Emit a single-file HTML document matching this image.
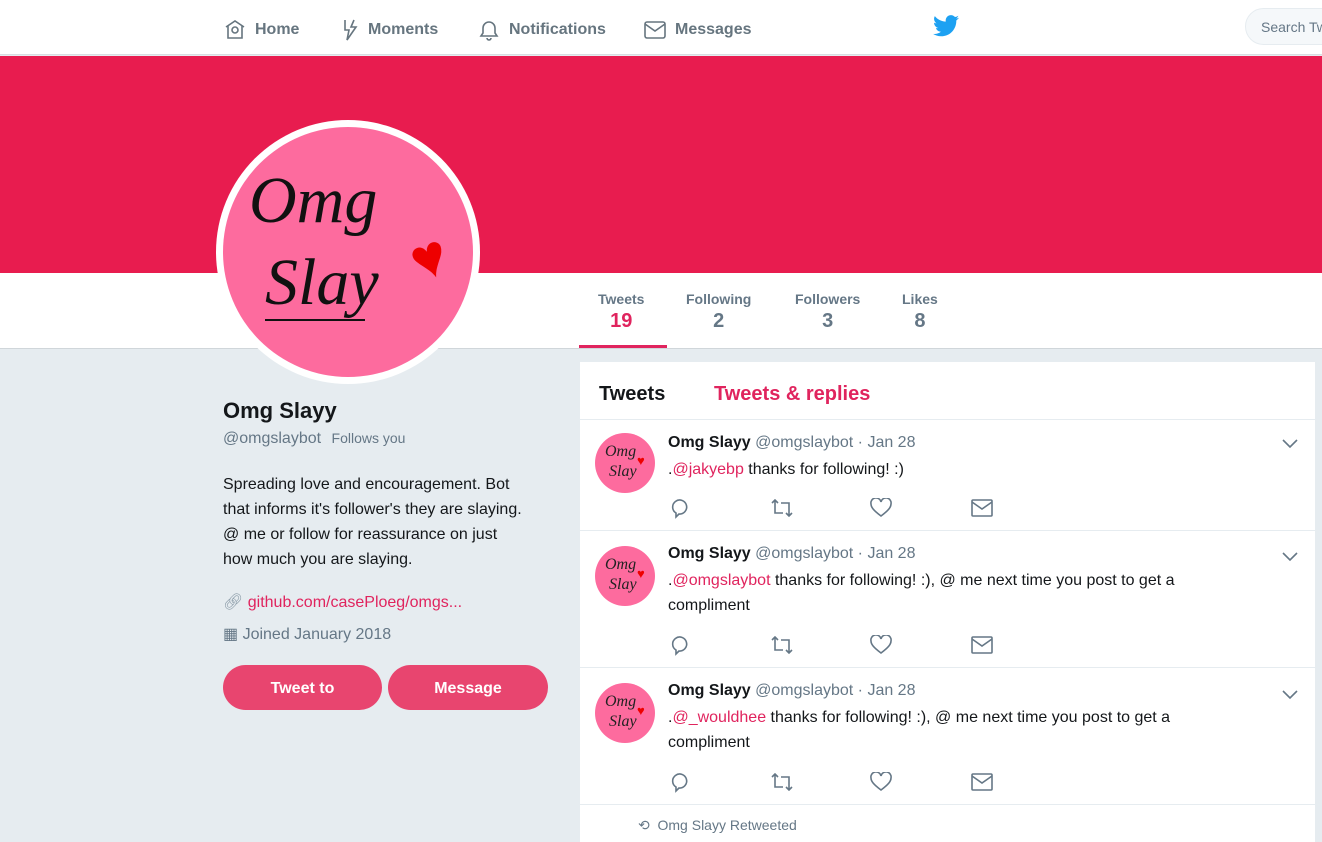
<!DOCTYPE html>
<html><head><meta charset="utf-8"><style>
*{margin:0;padding:0;box-sizing:border-box}
body{width:1322px;height:832px;overflow:hidden;background:#e6ecf0;font-family:"Liberation Sans",sans-serif;position:relative;color:#14171a}
.hdr{position:absolute;left:0;top:0;width:1322px;height:55px;background:#fff;border-bottom:1px solid #d8dde1}
.nav{position:absolute;top:18px;font-weight:bold;font-size:16px;color:#66757f;display:flex;align-items:center;gap:8px}
.nav svg{stroke:#66757f;fill:none;stroke-width:1.6}
.banner{position:absolute;left:0;top:56px;width:1322px;height:217px;background:#e81c4f}
.pnav{position:absolute;left:0;top:273px;width:1322px;height:76px;background:#fff;border-bottom:1px solid #d0d6da}
.st{position:absolute;top:18px;text-align:center;color:#657786;font-weight:bold;font-size:14px}
.st b{display:block;font-size:20px;margin-top:3px}
.av{position:absolute;left:216px;top:120px;width:264px;height:264px;border-radius:50%;background:#fff}
.av .in{position:absolute;left:7px;top:7px;width:250px;height:250px;border-radius:50%;background:#fd6b9e;overflow:hidden}
.hw{font-family:"Liberation Serif",serif;font-style:italic;color:#111;position:absolute}
.left{position:absolute;left:223px;top:398px;width:320px}
.btn{position:absolute;top:665px;height:45px;border-radius:23px;background:#e8456f;color:#fff;font-weight:bold;font-size:16px;text-align:center;line-height:48px}
.col{position:absolute;left:580px;top:362px;width:735px;height:480px;background:#fff}
.tabs{height:58px;border-bottom:1px solid #e6ecf0;position:relative}
.tw{position:relative;border-bottom:1px solid #e6ecf0}
.sm{position:absolute;left:15px;width:60px;height:60px;border-radius:50%;background:#fd6b9e;overflow:hidden}
.sm i{position:absolute;font-family:"Liberation Serif",serif;font-size:16px;color:#222}
.sm em{position:absolute;left:42px;top:20px;color:#e00;font-style:normal;font-size:13px}
.nm{position:absolute;left:88px;font-size:16px}
.nm b{color:#14171a}.nm span{color:#657786}
.tx{position:absolute;left:88px;font-size:16px;line-height:25px;width:580px}
.pk{color:#e0245e}
.acts svg{position:absolute;stroke:#657786;fill:none;stroke-width:1.6}
</style></head><body>
<div class="hdr">
 <div class="nav" style="left:223px"><svg width="24" height="24" viewBox="0 0 24 24"><path d="M3 9 L12 3 L21 9 M5 8 V20 H19 V8"/><circle cx="12" cy="12" r="3"/></svg>Home</div>
 <div class="nav" style="left:340px"><svg width="20" height="24" viewBox="0 0 20 24"><path d="M5 2 V12 H9 L7 22 L16 9 H11 L14 2"/></svg>Moments</div>
 <div class="nav" style="left:477px"><svg width="24" height="24" viewBox="0 0 24 24"><path d="M4 18 H20 L18 15 V10 A6 6 0 0 0 6 10 V15 Z M10 20 A2 2 0 0 0 14 20"/></svg>Notifications</div>
 <div class="nav" style="left:643px"><svg width="24" height="24" viewBox="0 0 24 24"><rect x="2" y="4" width="20" height="16" rx="2"/><path d="M2 6 L12 13 L22 6"/></svg>Messages</div>
 <svg style="position:absolute;left:933px;top:15px" width="26" height="22" viewBox="0 0 24 20"><path fill="#1da1f2" d="M24 2.4c-.9.4-1.8.6-2.8.8 1-.6 1.8-1.600 2.2-2.7-1 .6-2 1-3.1 1.2C19.3.7 18 0 16.6 0c-2.7 0-4.9 2.2-4.9 4.9 0 .4 0 .8.1 1.1C7.7 5.8 4.1 3.9 1.7.9c-.4.7-.7 1.6-.7 2.5 0 1.7.9 3.2 2.2 4.1-.8 0-1.6-.2-2.2-.6v.1c0 2.4 1.700 4.4 3.9 4.8-.4.1-.8.2-1.3.2-.3 0-.6 0-.9-.1.6 2 2.4 3.4 4.6 3.4-1.7 1.3-3.8 2.1-6.1 2.1-.4 0-.8 0-1.2-.1 2.2 1.4 4.8 2.2 7.5 2.2 9.1 0 14-7.5 14-14v-.6c1-.7 1.8-1.6 2.5-2.5z"/></svg>
 <div style="position:absolute;left:1245px;top:8px;width:100px;height:37px;border:1px solid #e6ecf0;background:#f5f8fa;border-radius:19px;font-size:14px;color:#657786;padding:10px 15px">Search Tw</div>
</div>
<div class="banner"></div>
<div class="pnav">
 <div class="st" style="left:598px;color:#657786">Tweets<b style="color:#e0245e">19</b></div>
 <div style="position:absolute;left:579px;top:72px;width:88px;height:3px;background:#e0245e"></div>
 <div class="st" style="left:686px">Following<b>2</b></div>
 <div class="st" style="left:795px">Followers<b>3</b></div>
 <div class="st" style="left:902px">Likes<b>8</b></div>
</div>
<div class="av"><div class="in">
 <div class="hw" style="left:26px;top:36px;font-size:66px;font-weight:300">Omg</div>
 <div class="hw" style="left:42px;top:118px;font-size:66px">Slay</div>
 <div style="position:absolute;left:42px;top:192px;width:100px;height:2px;background:#111"></div>
 <div style="position:absolute;left:188px;top:96px;color:#e00;font-size:60px;transform:rotate(-20deg)">♥</div>
</div></div>
<div class="left">
 <div style="font-size:22px;font-weight:bold">Omg Slayy</div>
 <div style="margin-top:6px;font-size:16px;color:#657786">@omgslaybot <span style="font-size:14px;margin-left:6px">Follows you</span></div>
 <div style="margin-top:24px;font-size:16px;line-height:25px;width:300px">Spreading love and encouragement. Bot that informs it's follower's they are slaying. @ me or follow for reassurance on just how much you are slaying.</div>
 <div style="margin-top:20px;font-size:16px;color:#e0245e"><span style="color:#8899a6">🔗︎</span> github.com/casePloeg/omgs...</div>
 <div style="margin-top:12px;font-size:16px;color:#657786"><span>▦</span> Joined January 2018</div>
</div>
<div class="btn" style="left:223px;width:159px">Tweet to</div>
<div class="btn" style="left:388px;width:160px">Message</div>
<div class="col">
 <div class="tabs"><div style="position:absolute;left:19px;top:21px;font-size:20px;font-weight:bold">Tweets</div><div style="position:absolute;left:134px;top:21px;font-size:20px;font-weight:bold;color:#e0245e">Tweets &amp; replies</div></div>
 <div class="tw" style="height:111px">
  <div class="sm" style="top:13px"><i style="left:10px;top:10px">Omg</i><i style="left:14px;top:30px">Slay</i><em>♥</em></div>
  <div class="nm" style="top:14px"><b>Omg Slayy</b> <span>@omgslaybot · Jan 28</span></div>
  <div class="tx" style="top:37px">.<span class="pk">@jakyebp</span> thanks for following! :)</div>
 </div>
 <div class="tw" style="height:137px">
  <div class="sm" style="top:15px"><i style="left:10px;top:10px">Omg</i><i style="left:14px;top:30px">Slay</i><em>♥</em></div>
  <div class="nm" style="top:14px"><b>Omg Slayy</b> <span>@omgslaybot · Jan 28</span></div>
  <div class="tx" style="top:37px">.<span class="pk">@omgslaybot</span> thanks for following! :), @ me next time you post to get a compliment</div>
 </div>
 <div class="tw" style="height:137px">
  <div class="sm" style="top:15px"><i style="left:10px;top:10px">Omg</i><i style="left:14px;top:30px">Slay</i><em>♥</em></div>
  <div class="nm" style="top:14px"><b>Omg Slayy</b> <span>@omgslaybot · Jan 28</span></div>
  <div class="tx" style="top:37px">.<span class="pk">@_wouldhee</span> thanks for following! :), @ me next time you post to get a compliment</div>
 </div>
 <div style="position:absolute;left:58px;top:455px;font-size:14px;color:#657786">⟲ &nbsp;Omg Slayy Retweeted</div>
</div>
<div class="acts">
 <svg style="left:671px;top:497px" width="22" height="22" viewBox="0 0 22 22"><path d="M8 17 L5 20 V16 A7 7 0 1 1 8 17 Z"/></svg>
 <svg style="left:770px;top:499px" width="24" height="18" viewBox="0 0 24 18"><path d="M2 4 L5 1 L8 4 M5 1 V14 H13 M22 14 L19 17 L16 14 M19 17 V4 H11"/></svg>
 <svg style="left:870px;top:498px" width="22" height="20" viewBox="0 0 22 20"><path d="M11 18 C3 12 1 9 1 6 A4.5 4.5 0 0 1 11 4 A4.5 4.5 0 0 1 21 6 C21 9 19 12 11 18 Z"/></svg>
 <svg style="left:971px;top:499px" width="22" height="18" viewBox="0 0 22 18"><rect x="1" y="1" width="20" height="16" rx="1"/><path d="M1 3 L11 10 L21 3"/></svg>
 <svg style="left:671px;top:634px" width="22" height="22" viewBox="0 0 22 22"><path d="M8 17 L5 20 V16 A7 7 0 1 1 8 17 Z"/></svg>
 <svg style="left:770px;top:636px" width="24" height="18" viewBox="0 0 24 18"><path d="M2 4 L5 1 L8 4 M5 1 V14 H13 M22 14 L19 17 L16 14 M19 17 V4 H11"/></svg>
 <svg style="left:870px;top:635px" width="22" height="20" viewBox="0 0 22 20"><path d="M11 18 C3 12 1 9 1 6 A4.5 4.5 0 0 1 11 4 A4.5 4.5 0 0 1 21 6 C21 9 19 12 11 18 Z"/></svg>
 <svg style="left:971px;top:636px" width="22" height="18" viewBox="0 0 22 18"><rect x="1" y="1" width="20" height="16" rx="1"/><path d="M1 3 L11 10 L21 3"/></svg>
 <svg style="left:671px;top:771px" width="22" height="22" viewBox="0 0 22 22"><path d="M8 17 L5 20 V16 A7 7 0 1 1 8 17 Z"/></svg>
 <svg style="left:770px;top:773px" width="24" height="18" viewBox="0 0 24 18"><path d="M2 4 L5 1 L8 4 M5 1 V14 H13 M22 14 L19 17 L16 14 M19 17 V4 H11"/></svg>
 <svg style="left:870px;top:772px" width="22" height="20" viewBox="0 0 22 20"><path d="M11 18 C3 12 1 9 1 6 A4.5 4.5 0 0 1 11 4 A4.5 4.5 0 0 1 21 6 C21 9 19 12 11 18 Z"/></svg>
 <svg style="left:971px;top:773px" width="22" height="18" viewBox="0 0 22 18"><rect x="1" y="1" width="20" height="16" rx="1"/><path d="M1 3 L11 10 L21 3"/></svg>
 <svg style="left:1282px;top:439px" width="16" height="10" viewBox="0 0 16 10"><path d="M1 1 L8 8 L15 1"/></svg>
 <svg style="left:1282px;top:552px" width="16" height="10" viewBox="0 0 16 10"><path d="M1 1 L8 8 L15 1"/></svg>
 <svg style="left:1282px;top:690px" width="16" height="10" viewBox="0 0 16 10"><path d="M1 1 L8 8 L15 1"/></svg>
</div>
</body></html>
